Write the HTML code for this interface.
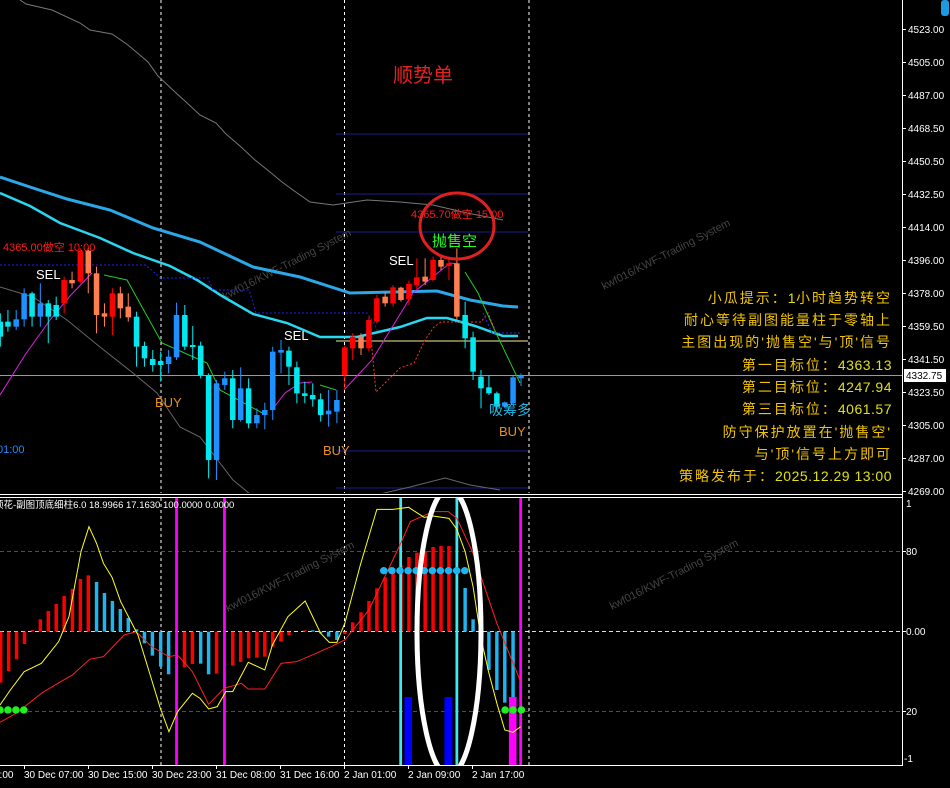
<!DOCTYPE html>
<html><head><meta charset="utf-8">
<style>
html,body{margin:0;padding:0;background:#000;width:950px;height:788px;overflow:hidden}
svg{display:block}
text{font-family:"Liberation Sans","Noto Sans CJK SC",sans-serif}
.ax{fill:#fff;font-size:10px}
.tl{fill:#fff;font-size:10px}
.rt{fill:#f2c400;font-size:14px;text-anchor:end;letter-spacing:2px}
.rt tspan.n{fill:#e0e010;font-size:14px;letter-spacing:0.5px}
.wm{fill:#444;font-size:11px}
</style></head><body>
<svg id="s" width="950" height="788" viewBox="0 0 950 788" xmlns="http://www.w3.org/2000/svg">
<defs>
<clipPath id="cm"><rect x="0" y="0" width="902" height="493"/></clipPath>
<clipPath id="cs"><rect x="0" y="498" width="902" height="267"/></clipPath>
</defs>
<rect width="950" height="788" fill="#000"/>

<g clip-path="url(#cm)">
 <g stroke="#fff" stroke-width="1" stroke-dasharray="3,3">
  <line x1="161" y1="0" x2="161" y2="494"/><line x1="344.5" y1="0" x2="344.5" y2="494"/><line x1="529" y1="0" x2="529" y2="494"/>
 </g>
 <g stroke="#1c1c96" stroke-width="1">
  <line x1="336" y1="134" x2="528" y2="134"/><line x1="336" y1="194" x2="528" y2="194"/><line x1="336" y1="232" x2="528" y2="232"/><line x1="336" y1="451" x2="528" y2="451"/><line x1="336" y1="488" x2="528" y2="488"/>
 </g>
 <line x1="336" y1="341" x2="528" y2="341" stroke="#f0f0a0" stroke-width="1"/>
 <line x1="0" y1="375.5" x2="902" y2="375.5" stroke="#9a9a9a" stroke-width="1"/>
 <polyline fill="none" stroke="#777" stroke-width="1" points="20,0 26,4 52,10 80,23 90,30 112,34 128,45 148,62 158,76 175,92 186,102 200,115 216,123 226,134 240,146 255,160 270,172 282,182 293,190 310,202 333,205 367,200 400,202 433,205 467,213 503,220"/>
 <polyline fill="none" stroke="#666" stroke-width="1" points="0,287 33,297 67,320 100,347 133,373 157,393 180,427 200,437 233,480 250,494"/>
 <polyline fill="none" stroke="#666" stroke-width="1" points="380,494 410,487 445,478 470,485 500,490"/>
 <text class="wm" transform="translate(225,300) rotate(-27)">kwf016/KWF-Trading System</text>
 <text class="wm" transform="translate(604,290) rotate(-27)">kwf016/KWF-Trading System</text>
 <polyline fill="none" stroke="#2aa8e8" stroke-width="3" points="0,177 33,188 67,199 110,210 153,228 200,242 253,267 300,277 350,293 437,291 470,300 503,306 518,307"/>
 <polyline fill="none" stroke="#28d8f0" stroke-width="2.5" points="0,193 30,206 60,223 100,238 133,253 170,266 197,280 222,296 253,314 287,323 320,337 357,337 400,327 427,318 447,318 475,326 503,336 518,336"/>
 <polyline fill="none" stroke="#2020ff" stroke-width="1" stroke-dasharray="2,2" points="0,265 146,265 160,278 208,278 213,290 249,290 256,313 367,313 374,323 378,332"/>
 <polyline fill="none" stroke="#e020e0" stroke-width="1" points="0,395 25,355 50,320 70,296 92,273"/>
 <polyline fill="none" stroke="#e020e0" stroke-width="1" points="272,410 285,393 300,383 312,382"/>
 <polyline fill="none" stroke="#e020e0" stroke-width="1" points="344,390 372,360 413,293 450,263 458,264"/>
 <polyline fill="none" stroke="#22cc22" stroke-width="1" points="104,275 127,280 162,343 207,363 220,390 266,415"/>
 <polyline fill="none" stroke="#22cc22" stroke-width="1" points="320,385 336,390"/>
 <polyline fill="none" stroke="#22cc22" stroke-width="1" points="465,272 478,293 496,333 520,383"/>
 <polyline fill="none" stroke="#ff3030" stroke-width="1" stroke-dasharray="2,2" points="369,317 376,392 400,368 414,363 425,340 434,327 441,322 481,322 488,313 495,330"/>
 <polyline fill="none" stroke="#2a2aff" stroke-width="1" stroke-dasharray="2,2" points="483,313 492,333 520,333"/>
 <g id="candles" transform="translate(0,160) scale(0.3448,0.3333)"></g>
 <text x="393" y="82" fill="#e82020" font-size="20">顺势单</text>
 <text x="3" y="251" fill="#ff1a1a" font-size="11">4365.00做空 10:00</text>
 <text x="411" y="218" fill="#ff1a1a" font-size="11">4365.70做空 15:00</text>
 <text x="432" y="246" fill="#22ff22" font-size="15">抛售空</text>
 <text x="36" y="279" fill="#fff" font-size="13">SEL</text>
 <text x="284" y="340" fill="#fff" font-size="13">SEL</text>
 <text x="389" y="265" fill="#fff" font-size="13">SEL</text>
 <text x="155" y="407" fill="#e8901a" font-size="13">BUY</text>
 <text x="323" y="455" fill="#e8901a" font-size="13">BUY</text>
 <text x="499" y="436" fill="#e8901a" font-size="13">BUY</text>
 <text x="489" y="415" fill="#22b8e8" font-size="14">吸筹多</text>
 <text x="-3" y="453" fill="#1e90ff" font-size="11">01:00</text>
 <ellipse cx="457" cy="226" rx="37" ry="33" fill="none" stroke="#e02020" stroke-width="3"/>
 <g class="rt">
  <text x="892" y="303">小瓜提示：<tspan class="n">1</tspan>小时趋势转空</text>
  <text x="892" y="325">耐心等待副图能量柱于零轴上</text>
  <text x="892" y="347">主图出现的'抛售空'与'顶'信号</text>
  <text x="892" y="370">第一目标位：<tspan class="n">4363.13</tspan></text>
  <text x="892" y="392">第二目标位：<tspan class="n">4247.94</tspan></text>
  <text x="892" y="414">第三目标位：<tspan class="n">4061.57</tspan></text>
  <text x="892" y="437">防守保护放置在'抛售空'</text>
  <text x="892" y="459">与'顶'信号上方即可</text>
  <text x="892" y="481">策略发布于：<tspan class="n">2025.12.29 13:00</tspan></text>
 </g>
</g>
<g stroke="#fff" stroke-width="1" fill="none">
 <line x1="902.5" y1="0" x2="902.5" y2="765"/>
 <line x1="0" y1="494.5" x2="902" y2="494.5"/>
 <line x1="0" y1="497.5" x2="902" y2="497.5"/>
 <line x1="0" y1="765.5" x2="903" y2="765.5"/>
</g>
<rect x="941" y="0" width="8" height="16" rx="3" fill="#1e9be0"/>
<g class="ax" id="pax"></g>
<rect x="904" y="369" width="42" height="13" fill="#fff"/>
<text x="906" y="379" fill="#000" font-size="10">4332.75</text>

<g clip-path="url(#cs)">
 <g stroke-width="1" stroke-dasharray="4,3">
  <line x1="0" y1="551.5" x2="902" y2="551.5" stroke="#a02838"/>
  <line x1="0" y1="711.5" x2="902" y2="711.5" stroke="#a02838"/>
  <line x1="0" y1="631.5" x2="902" y2="631.5" stroke="#ddd"/>
 </g>
 <g stroke="#fff" stroke-width="1" stroke-dasharray="3,3">
  <line x1="161" y1="498" x2="161" y2="765"/><line x1="344.5" y1="498" x2="344.5" y2="765"/><line x1="529" y1="498" x2="529" y2="765"/>
 </g>
 <text class="wm" transform="translate(228,612) rotate(-27)">kwf016/KWF-Trading System</text>
 <text class="wm" transform="translate(612,610) rotate(-27)">kwf016/KWF-Trading System</text>
 <g id="hist" transform="translate(0,490) scale(0.3448,0.3333)"></g>
 <text x="-6" y="508" fill="#fff" font-size="9.5">顶花-副图顶底细柱6.0 18.9966 17.1630 100.0000 0.0000</text>
 <ellipse cx="449" cy="632" rx="32" ry="143" fill="none" stroke="#fff" stroke-width="5"/>
</g>
<g class="ax">
 <text x="906" y="507">1</text><text x="906" y="555">80</text><text x="906" y="635">0.00</text><text x="906" y="715">20</text><text x="904" y="762">-1</text>
</g>
<g stroke="#fff"><line x1="903" y1="551.5" x2="906" y2="551.5"/><line x1="903" y1="631.5" x2="906" y2="631.5"/><line x1="903" y1="711.5" x2="906" y2="711.5"/></g>
<g class="tl">
 <text x="-6" y="778">2:00</text>
 <text x="24" y="778">30 Dec 07:00</text>
 <text x="88" y="778">30 Dec 15:00</text>
 <text x="152" y="778">30 Dec 23:00</text>
 <text x="216" y="778">31 Dec 08:00</text>
 <text x="280" y="778">31 Dec 16:00</text>
 <text x="344" y="778">2 Jan 01:00</text>
 <text x="408" y="778">2 Jan 09:00</text>
 <text x="472" y="778">2 Jan 17:00</text>
</g>
<g stroke="#fff"><line x1="24.5" y1="766" x2="24.5" y2="769"/><line x1="88.5" y1="766" x2="88.5" y2="769"/><line x1="152.5" y1="766" x2="152.5" y2="769"/><line x1="216.5" y1="766" x2="216.5" y2="769"/><line x1="280.5" y1="766" x2="280.5" y2="769"/><line x1="344.5" y1="766" x2="344.5" y2="769"/><line x1="408.5" y1="766" x2="408.5" y2="769"/><line x1="472.5" y1="766" x2="472.5" y2="769"/></g>
</svg>
<script>
(function(){
var NS="http://www.w3.org/2000/svg";
function el(p,t,a){var e=document.createElementNS(NS,t);for(var k in a)e.setAttribute(k,a[k]);p.appendChild(e);return e;}
var col={r:"#ff0000",s:"#ff7f50",b:"#1e90ff",c:"#00e8f0",k:"#1eb4f0",m:"#ff00ff",B:"#0000ff",C:"#40e8f0"};
var C=[[1,'c',485,530,460,560],[23,'c',485,500,450,515],[47,'b',478,500,450,510],[70,'b',400,478,385,500],[93,'c',400,470,395,500],[117,'b',430,470,370,500],[140,'c',430,470,420,550],[163,'c',435,470,410,480],[186,'r',360,430,350,460],[209,'s',360,370,335,385],[233,'r',272,365,265,370],[256,'s',272,340,265,400],[280,'s',340,465,320,520],[303,'s',460,470,430,500],[326,'r',400,470,385,525],[349,'s',400,445,380,475],[372,'s',440,472,400,485],[396,'c',470,560,455,620],[419,'c',558,595,545,620],[443,'c',597,615,570,635],[466,'c',603,615,575,665],[489,'b',590,612,570,640],[512,'b',465,592,428,600],[536,'c',465,560,435,570],[559,'c',555,560,498,600],[582,'c',557,645,545,655],[605,'c',645,900,640,955],[628,'b',670,900,660,960],[652,'b',655,675,635,690],[675,'c',655,780,630,805],[698,'b',685,780,622,785],[721,'c',685,790,655,805],[745,'b',765,790,745,805],[768,'b',750,765,728,808],[791,'b',575,750,560,780],[815,'b',570,578,540,640],[838,'c',572,620,560,675],[861,'c',622,700,605,730],[884,'c',700,708,665,730],[907,'c',705,718,670,740],[930,'c',718,765,700,785],[953,'b',752,763,690,800],[977,'b',720,755,690,790],[1000,'r',562,645,555,690],[1023,'r',530,565,520,600],[1047,'s',530,565,520,585],[1070,'r',480,565,470,575],[1093,'r',415,485,405,490],[1117,'s',410,430,395,440],[1140,'r',382,430,375,440],[1163,'s',383,420,380,425],[1186,'r',372,418,362,435],[1209,'r',352,375,295,390],[1233,'s',350,365,295,375],[1256,'r',300,360,290,365],[1279,'s',300,320,285,330],[1302,'r',310,318,290,360],[1325,'s',310,470,265,480],[1349,'c',465,535,425,565],[1372,'c',532,635,515,660],[1395,'c',650,685,630,745],[1418,'c',682,700,645,705],[1441,'c',700,740,695,755],[1464,'b',727,740,725,745],[1488,'b',652,730,648,735],[1511,'b',647,655,640,678]];
var g=document.getElementById("candles");
C.forEach(function(c){var f=col[c[1]];
 el(g,"rect",{x:c[0]-1.5,y:c[4],width:3,height:c[5]-c[4],fill:f});
 el(g,"rect",{x:c[0]-8,y:c[2],width:16,height:Math.max(6,c[3]-c[2]),fill:f});});
var h=document.getElementById("hist");
var H=[[2,'r',578],[25,'r',543],[48,'r',508],[71,'r',462],[94,'r',420],[117,'r',388],[140,'r',363],[163,'r',342],[186,'r',318],[210,'r',297],[233,'r',267],[256,'r',256],[280,'k',276],[303,'k',309],[326,'k',333],[349,'k',357],[372,'k',384],[396,'k',418],[419,'k',460],[442,'k',497],[466,'k',530],[489,'k',553],[535,'r',532],[558,'r',522],[582,'k',521],[605,'k',553],[628,'r',551],[675,'r',527],[698,'r',516],[721,'r',505],[745,'r',503],[768,'r',500],[791,'r',470],[815,'r',455],[838,'r',435],[884,'r',421],[907,'k',421],[930,'k',430],[953,'k',440],[977,'k',450],[1000,'r',432],[1023,'r',397],[1047,'r',367],[1070,'r',333],[1093,'r',295],[1117,'r',262],[1140,'r',236],[1163,'r',226],[1186,'r',201],[1209,'r',188],[1233,'r',183],[1256,'r',171],[1279,'r',168],[1302,'r',168],[1349,'k',294],[1372,'k',388],[1418,'k',540],[1441,'k',600],[1464,'k',638],[1488,'k',625]];
H.forEach(function(b){var y1=Math.min(425,b[2]),y2=Math.max(425,b[2]);
 el(h,"rect",{x:b[0]-5,y:y1,width:10,height:Math.max(4,y2-y1),fill:col[b[1]]});});
el(h,"rect",{x:1173,y:621,width:22,height:204,fill:"#0000ff"});
el(h,"rect",{x:1289,y:621,width:23,height:204,fill:"#0000ff"});
el(h,"rect",{x:1476,y:621,width:22,height:204,fill:"#ff00ff"});
[[512,"#ff00ff"],[651,"#ff00ff"],[1510,"#ff00ff"],[1162,"#40e8f0"],[1325,"#40e8f0"]].forEach(function(v){
 el(h,"rect",{x:v[0]-4,y:20,width:8,height:805,fill:v[1]});});
function pl(pts,c){el(h,"polyline",{points:pts,fill:"none",stroke:c,"stroke-width":1,"vector-effect":"non-scaling-stroke"});}
pl("0,697 50,668 120,610 160,585 210,555 260,508 300,500 360,435 395,425 440,470 490,500 515,495 558,545 605,643 650,595 700,580 720,597 768,597 815,520 860,515 910,493 960,470 1000,450 1070,360 1160,165 1190,95 1256,65 1300,65 1325,85 1372,190 1441,400 1510,575","#ff2020");
pl("0,645 30,600 70,545 120,520 170,455 200,380 235,185 258,110 280,160 300,220 325,262 350,335 400,435 440,570 465,655 490,725 515,665 558,610 580,625 605,657 630,650 655,605 675,605 720,517 768,540 790,465 835,380 885,333 930,430 955,457 977,457 1000,400 1045,225 1093,58 1140,58 1185,52 1230,82 1256,78 1302,85 1325,118 1349,185 1372,290 1395,445 1418,550 1441,640 1464,720 1488,727 1510,710","#ffff20");
for(var i=0;i<11;i++)el(h,"ellipse",{cx:1113+23.5*i,cy:242,rx:11,ry:11,fill:"#1eb4f0"});
[0,23,46,69,1465,1488,1512].forEach(function(x){el(h,"ellipse",{cx:x,cy:660,rx:11,ry:11,fill:"#22ee22"});});
var P=["4523.00","4505.00","4487.00","4468.50","4450.50","4432.50","4414.00","4396.00","4378.00","4359.50","4341.50","4323.50","4305.00","4287.00","4269.00"];
var pa=document.getElementById("pax");
P.forEach(function(p,i){var y=29+i*33;
 el(pa,"line",{x1:903,y1:y+0.5,x2:906,y2:y+0.5,stroke:"#fff"});
 var t=el(pa,"text",{x:908,y:y+4});t.textContent=p;});
})();
</script>
</body></html>
